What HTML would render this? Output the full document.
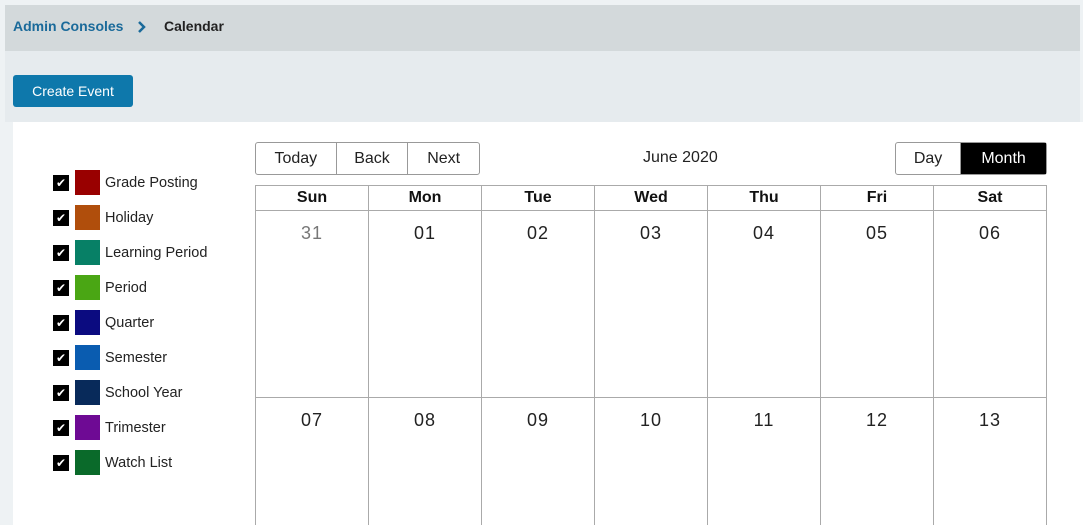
<!DOCTYPE html>
<html><head><meta charset="utf-8"><style>
*{box-sizing:border-box;margin:0;padding:0}
html,body{width:1083px;height:525px;overflow:hidden}
body{background:#eef2f4;font-family:"Liberation Sans",sans-serif;position:relative}
.hdr{position:absolute;left:5px;top:5px;width:1075px;height:46px;background:#d3d9db;}
.hdr .a{position:absolute;left:8px;top:13px;font-size:14px;font-weight:bold;color:#1a6a9a}
.hdr svg{position:absolute;left:131px;top:15px}
.hdr .b{position:absolute;left:159px;top:13px;font-size:14px;font-weight:bold;color:#222}
.sub{position:absolute;left:5px;top:51px;width:1075px;height:71px;background:#e6ebee}
.btn{position:absolute;left:13px;top:75px;width:120px;height:32px;background:#0e78ab;color:#fff;border-radius:3px;font-size:14px;line-height:32px;text-align:center}
.panel{position:absolute;left:13px;top:122px;width:1070px;height:403px;background:#fff}
.leg{position:absolute;left:53px;font-size:14.5px;color:#222;display:flex;align-items:center}
.cb{width:16px;height:16px;background:#000;color:#fff;font-size:12px;line-height:16px;text-align:center;margin-right:6px}
.sw{width:25px;height:25px;margin-right:5px}
.grp{position:absolute;top:142px;height:33px;border:1px solid #999;border-radius:3px;display:flex;font-size:16px;color:#222}
.grp div{line-height:31px;text-align:center;border-right:1px solid #999}
.grp div:last-child{border-right:none}
.cal{position:absolute;left:255px;top:185px;width:792px;height:340px;overflow:hidden}
table{border-collapse:collapse;width:792px}
td,th{border:1px solid #aaa;width:113px;text-align:center}
th{height:25px;font-size:16px;color:#111}
td{vertical-align:top;font-size:18px;color:#222;padding-top:12px;letter-spacing:1px}
</style></head><body>
<div class="hdr"><span class="a">Admin Consoles</span><svg width="12" height="14" viewBox="0 0 12 14"><path d="M3 2 L8 7 L3 12" stroke="#1a6a9a" stroke-width="2.5" fill="none"/></svg><span class="b">Calendar</span></div>
<div class="sub"></div>
<div class="btn">Create Event</div>
<div class="panel"></div>
<div class="leg" style="top:170px"><div class="cb">✔</div><div class="sw" style="background:#990000"></div>Grade Posting</div>
<div class="leg" style="top:205px"><div class="cb">✔</div><div class="sw" style="background:#b04e0c"></div>Holiday</div>
<div class="leg" style="top:240px"><div class="cb">✔</div><div class="sw" style="background:#078066"></div>Learning Period</div>
<div class="leg" style="top:275px"><div class="cb">✔</div><div class="sw" style="background:#4aa614"></div>Period</div>
<div class="leg" style="top:310px"><div class="cb">✔</div><div class="sw" style="background:#0b0b80"></div>Quarter</div>
<div class="leg" style="top:345px"><div class="cb">✔</div><div class="sw" style="background:#0a5cb0"></div>Semester</div>
<div class="leg" style="top:380px"><div class="cb">✔</div><div class="sw" style="background:#082a5a"></div>School Year</div>
<div class="leg" style="top:415px"><div class="cb">✔</div><div class="sw" style="background:#6e0a94"></div>Trimester</div>
<div class="leg" style="top:450px"><div class="cb">✔</div><div class="sw" style="background:#0a6a2a"></div>Watch List</div>
<div class="grp" style="left:255px;width:225px"><div style="width:81px">Today</div><div style="width:72px">Back</div><div style="width:71px">Next</div></div>
<div style="position:absolute;left:643px;top:149px;font-size:16px;color:#222">June 2020</div>
<div class="grp" style="left:895px;width:152px"><div style="width:66px">Day</div><div style="width:86px;background:#000;color:#fff">Month</div></div>
<div class="cal"><table>
<tr><th>Sun</th><th>Mon</th><th>Tue</th><th>Wed</th><th>Thu</th><th>Fri</th><th>Sat</th></tr>
<tr style="height:187px"><td style="color:#777">31</td><td>01</td><td>02</td><td>03</td><td>04</td><td>05</td><td>06</td></tr>
<tr style="height:187px"><td>07</td><td>08</td><td>09</td><td>10</td><td>11</td><td>12</td><td>13</td></tr>
</table></div>
</body></html>
